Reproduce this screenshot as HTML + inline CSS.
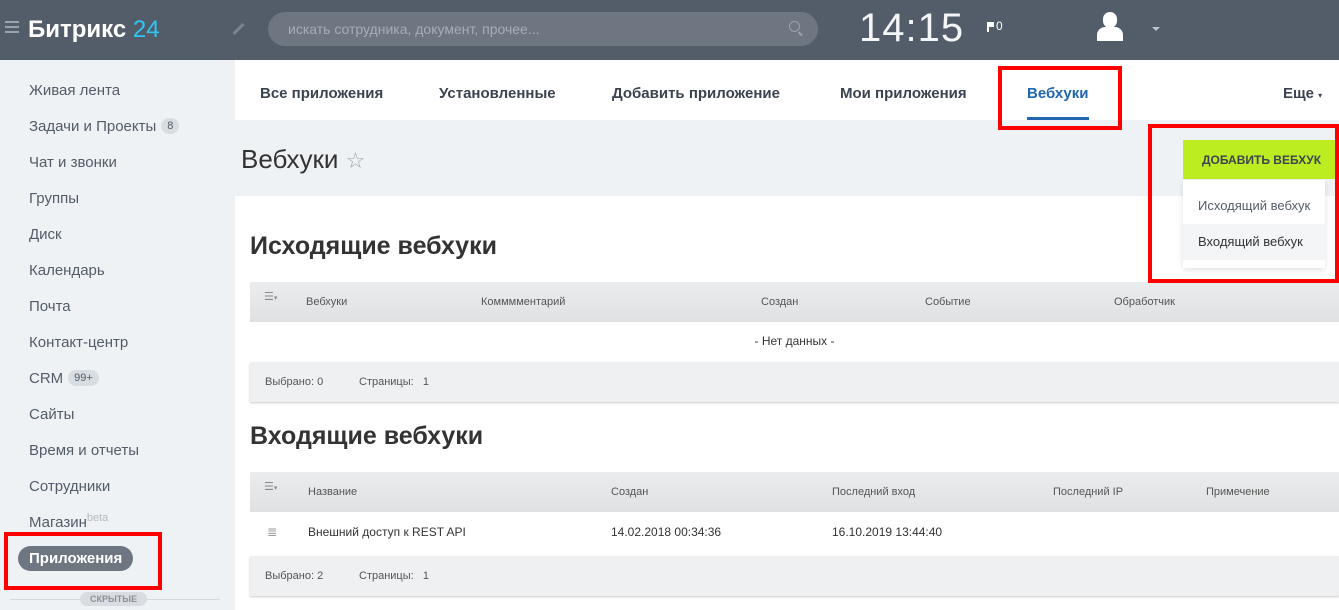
<!DOCTYPE html>
<html><head><meta charset="utf-8"><style>
*{margin:0;padding:0;box-sizing:border-box}
body{width:1339px;height:610px;overflow:hidden;font-family:"Liberation Sans","DejaVu Sans",sans-serif;background:#fff;position:relative}
.abs{position:absolute}
.hdr{left:0;top:0;width:1339px;height:60px;background:#535c69}
.side{left:0;top:60px;width:235px;height:550px;background:#eef2f4}
.side div{position:absolute;left:29px;font-size:15px;color:#535c69}
.badge{display:inline-block;background:#d8dde2;color:#535c69;border-radius:9px;font-size:11px;padding:2px 6px;margin-left:5px;vertical-align:2px}
.tabs{left:235px;top:60px;width:1104px;height:60px;background:#fff}
.tabs span{position:absolute;top:25px;font-size:15px;color:#3b4350;font-weight:bold}
.ta{left:235px;top:120px;width:1104px;height:76px;background:#eef2f4}
.th{background:linear-gradient(#ebeced,#dfe1e3);height:40px;font-size:11px;color:#555}
.th span,.tr span{position:absolute;top:14px}
.tf{background:#eef0f1;height:40px;font-size:11px;color:#555;box-shadow:0 1px 2px #ccc}
.red{border:4px solid #f00}
h2{position:absolute;left:250px;font-size:25px;color:#333;font-weight:bold}
</style></head><body>
<div class="abs hdr"></div>
<div class="abs" style="left:5px;top:21px;width:14px;height:2px;background:#9aa2ac;box-shadow:0 5px 0 #9aa2ac,0 10px 0 #9aa2ac"></div>
<div class="abs" style="left:28px;top:16px;font-size:24px;color:#fff;font-weight:bold">Битрикс <span style="color:#2fc6f6;font-weight:normal">24</span></div>
<div class="abs" style="left:237px;top:22px;width:3px;height:14px;background:#7c848f;transform:rotate(45deg)"></div>
<div class="abs" style="left:268px;top:12px;width:550px;height:34px;background:#6e7682;border-radius:17px"></div>
<div class="abs" style="left:288px;top:21px;font-size:14px;color:#a7adb5">искать сотрудника, документ, прочее...</div>
<div class="abs" style="left:789px;top:21px;width:11px;height:11px;border:1.5px solid #9aa2ac;border-radius:50%"></div>
<div class="abs" style="left:798px;top:33px;width:5px;height:1.5px;background:#9aa2ac;transform:rotate(45deg)"></div>
<div class="abs" style="left:859px;top:6px;font-size:40px;color:#f4f5f6;font-weight:300;letter-spacing:1px">14:15</div>
<div class="abs" style="left:987px;top:22px;width:2px;height:10px;background:#fff"></div>
<div class="abs" style="left:989px;top:22px;width:5px;height:5px;background:#fff"></div>
<div class="abs" style="left:996px;top:19px;font-size:12px;color:#fff">0</div>
<div class="abs" style="left:1103px;top:12px;width:14px;height:16px;background:#fff;border-radius:7px"></div>
<div class="abs" style="left:1097px;top:27px;width:26px;height:14px;background:#fff;border-radius:8px 8px 0 0"></div>
<div class="abs" style="left:1152px;top:27px;border:4px solid transparent;border-top-color:#bfc4ca"></div>

<div class="abs side">
<div style="top:22px">Живая лента</div>
<div style="top:58px">Задачи и Проекты<span class="badge">8</span></div>
<div style="top:94px">Чат и звонки</div>
<div style="top:130px">Группы</div>
<div style="top:166px">Диск</div>
<div style="top:202px">Календарь</div>
<div style="top:238px">Почта</div>
<div style="top:274px">Контакт-центр</div>
<div style="top:310px">CRM<span class="badge">99+</span></div>
<div style="top:346px">Сайты</div>
<div style="top:382px">Время и отчеты</div>
<div style="top:418px">Сотрудники</div>
<div style="top:452px">Магазин<sup style="font-size:11px;color:#b5bbc2">beta</sup></div>
<div style="left:18px;top:486px;background:#6e7681;color:#fff;font-weight:bold;border-radius:13px;padding:4px 11px;font-size:15px">Приложения</div>
<div style="left:10px;top:539px;width:210px;height:1px;background:#d5d9dd"></div>
<div style="left:80px;top:532px;background:#d9dde2;color:#8a9199;font-size:9px;font-weight:bold;padding:2px 10px;border-radius:7px">СКРЫТЫЕ</div>
</div>

<div class="abs tabs">
<span style="left:25px">Все приложения</span>
<span style="left:204px">Установленные</span>
<span style="left:377px">Добавить приложение</span>
<span style="left:605px">Мои приложения</span>
<span style="left:792px;color:#2067b0">Вебхуки</span>
<div class="abs" style="left:792px;top:57px;width:62px;height:3px;background:#2067b0"></div>
<span style="left:1048px">Еще <small style="font-size:8px">▾</small></span>
</div>
<div class="abs ta"></div>
<div class="abs" style="left:241px;top:144px;font-size:26px;color:#333">Вебхуки <span style="color:#a0a6ad;font-size:22px">☆</span></div>
<div class="abs" style="left:1183px;top:140px;width:156px;height:39px;background:#bbed21;color:#3d4450;font-size:12px;font-weight:bold;padding-top:13px;padding-left:19px">ДОБАВИТЬ ВЕБХУК</div>
<div class="abs" style="left:1183px;top:180px;width:142px;height:88px;background:#fff;box-shadow:0 2px 6px rgba(0,0,0,.12)"></div>
<div class="abs" style="left:1183px;top:224px;width:142px;height:36px;background:#f3f5f6"></div>
<div class="abs" style="left:1198px;top:198px;font-size:13px;color:#535c69">Исходящий вебхук</div>
<div class="abs" style="left:1198px;top:234px;font-size:13px;color:#333">Входящий вебхук</div>

<h2 style="top:232px">Исходящие вебхуки</h2>
<div class="abs th" style="left:250px;top:282px;width:1089px"><span style="left:14px;top:8px;color:#888">☰<small style="font-size:7px">▾</small></span><span style="left:56px">Вебхуки</span><span style="left:231px">Комммментарий</span><span style="left:511px">Создан</span><span style="left:675px">Событие</span><span style="left:864px">Обработчик</span></div>
<div class="abs" style="left:250px;top:334px;width:1089px;text-align:center;font-size:12px;color:#333">- Нет данных -</div>
<div class="abs tf" style="left:250px;top:362px;width:1089px"><span class="abs" style="left:15px;top:14px">Выбрано: 0</span><span class="abs" style="left:109px;top:14px">Страницы: &nbsp; 1</span></div>

<h2 style="top:422px">Входящие вебхуки</h2>
<div class="abs th" style="left:250px;top:472px;width:1089px"><span style="left:14px;top:8px;color:#888">☰<small style="font-size:7px">▾</small></span><span style="left:58px">Название</span><span style="left:361px">Создан</span><span style="left:582px">Последний вход</span><span style="left:803px">Последний IP</span><span style="left:956px">Примечение</span></div>
<div class="abs tr" style="left:250px;top:511px;width:1089px;height:40px;font-size:12px;color:#333"><span style="left:17px;color:#999">≣</span><span style="left:58px">Внешний доступ к REST API</span><span style="left:361px">14.02.2018 00:34:36</span><span style="left:582px">16.10.2019 13:44:40</span></div>
<div class="abs tf" style="left:250px;top:556px;width:1089px"><span class="abs" style="left:15px;top:14px">Выбрано: 2</span><span class="abs" style="left:109px;top:14px">Страницы: &nbsp; 1</span></div>

<div class="abs red" style="left:998px;top:66px;width:124px;height:64px"></div>
<div class="abs red" style="left:1148px;top:124px;width:191px;height:159px"></div>
<div class="abs red" style="left:4px;top:532px;width:158px;height:58px"></div>
</body></html>
